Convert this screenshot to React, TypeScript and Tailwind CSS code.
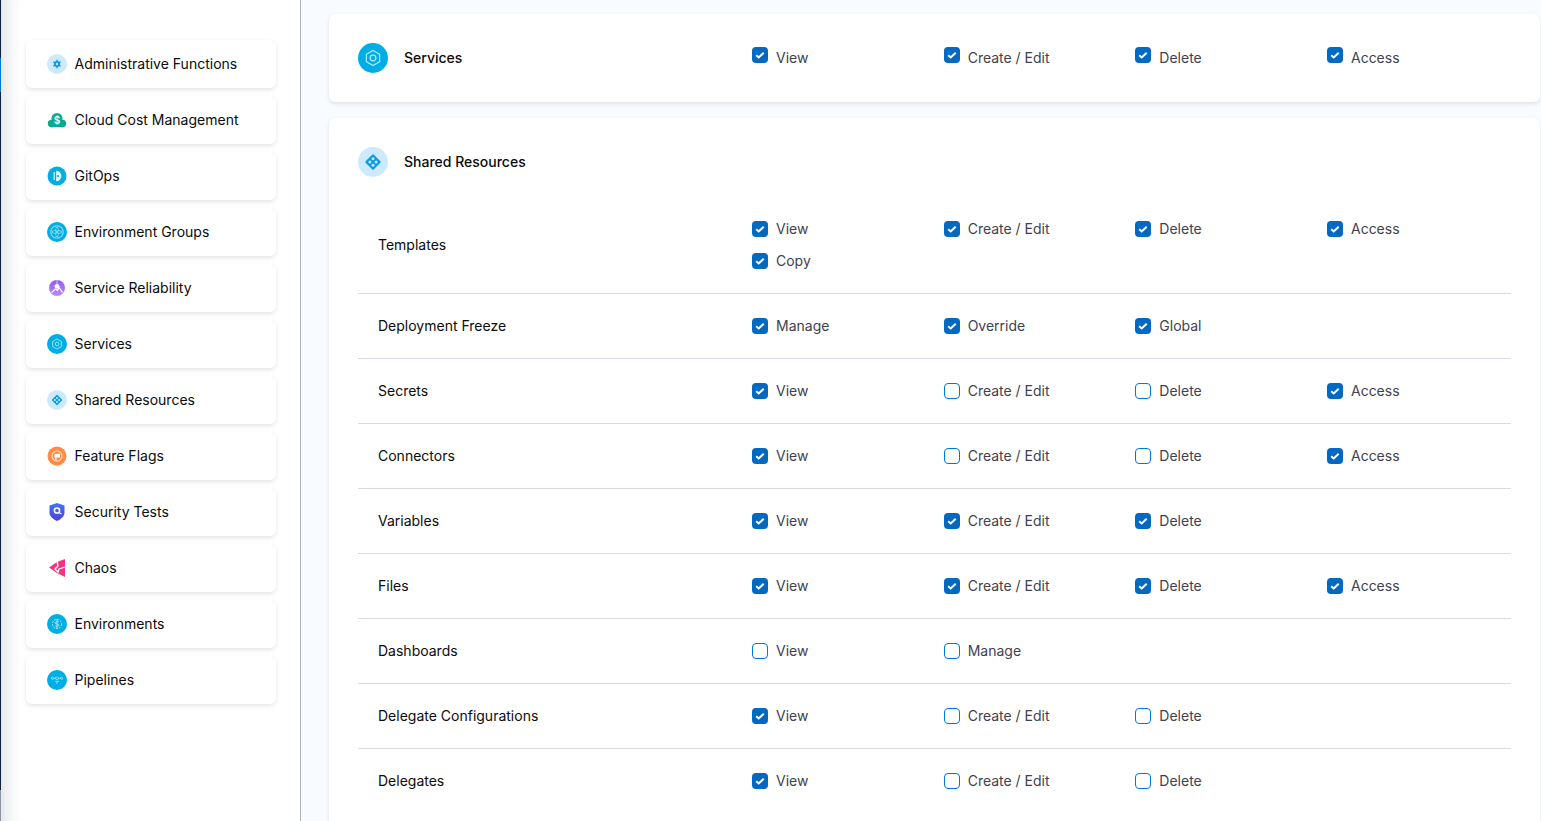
import type { ReactNode } from "react";

const CYAN = "#00ade4";
const PALE = "#cdeafc";

function Round({ bg, children }: { bg: string; children: ReactNode }) {
  return (
    <svg viewBox="0 0 20 20" className="w-5 h-5 shrink-0">
      <circle cx="10" cy="10" r="10" fill={bg} />
      {children}
    </svg>
  );
}

const AdminIcon = () => (
  <Round bg={PALE}>
    <g stroke="#0a9be8" strokeWidth="1.400">
      <path d="M10 5.800v8.400M6.400 7.900l7.200 4.200M6.400 12.100l7.200-4.200" />
    </g>
    <circle cx="10" cy="10" r="3" fill="#0a9be8" />
    <circle cx="10" cy="10" r="1.200" fill={PALE} />
  </Round>
);

const CloudIcon = () => (
  <svg viewBox="0 0 20 20" className="w-5 h-5 shrink-0">
    <g fill="#0ba98f">
      <circle cx="10" cy="8.500" r="5.500" />
      <circle cx="4.500" cy="13.500" r="3.700" />
      <circle cx="15.500" cy="13.500" r="3.700" />
      <rect x="4" y="11" width="12" height="6.200" />
    </g>
    <text x="10" y="14.200" fontSize="10" fontFamily="Inter" fontWeight="600" fill="#fff" textAnchor="middle">$</text>
  </svg>
);

const GitOpsIcon = () => (
  <svg viewBox="0 0 20 20" className="w-5 h-5 shrink-0">
    <circle cx="10" cy="10" r="9.500" fill={CYAN} />
    <path d="M9.200 4.800a5.200 5.200 0 0 1 0 10.400z" fill="#e8f9fe" />
    <circle cx="11" cy="10" r="1.100" fill={CYAN} />
    <path d="M7.200 6v8" stroke="#e8f9fe" strokeWidth="1.100" />
  </svg>
);

const EnvGroupIcon = () => (
  <Round bg={CYAN}>
    <g fill="none" stroke="#a9e6fa" strokeWidth=".6">
      <circle cx="8" cy="8" r="3.500" />
      <circle cx="12" cy="8" r="3.500" />
      <circle cx="8" cy="12" r="3.500" />
      <circle cx="12" cy="12" r="3.500" />
      <circle cx="10" cy="10" r="6.500" />
    </g>
  </Round>
);

const SrmIcon = () => (
  <svg viewBox="0 0 20 20" className="w-5 h-5 shrink-0">
    <defs>
      <linearGradient id="srm" x1="0" y1="0" x2="0" y2="1">
        <stop offset="0" stopColor="#8f5bf0" />
        <stop offset="1" stopColor="#c08af5" />
      </linearGradient>
    </defs>
    <circle cx="10" cy="10" r="8" fill="url(#srm)" />
    <path d="M4.500 14.500l4-3.500 2 1.500 1.500-3 3.500 5" fill="none" stroke="#fff" strokeWidth="1.300" />
    <circle cx="10" cy="8.300" r="2.400" fill="#fff" />
    <path d="M10 2v4" stroke="#f3e9ff" strokeWidth=".7" />
  </svg>
);

const ServiceGlyph = ({ stroke }: { stroke: string }) => (
  <g fill="none" stroke={stroke} strokeWidth=".8">
    <path d="M10 5l4.400 2.500v5L10 15l-4.400-2.500v-5z" />
    <circle cx="10" cy="10" r="1.900" />
  </g>
);

const ServicesSmallIcon = () => (
  <Round bg={CYAN}>
    <ServiceGlyph stroke="#b5ecfc" />
  </Round>
);

const SharedGlyph = () => (
  <g>
    <path d="M10 5.500L14.500 10 10 14.500 5.500 10z" fill="#0a9be8" stroke="#0a9be8" strokeWidth="1.200" strokeLinejoin="round" />
    <g fill={PALE}>
      <circle cx="10" cy="7.900" r="1" />
      <circle cx="10" cy="12.100" r="1" />
      <circle cx="7.900" cy="10" r="1" />
      <circle cx="12.100" cy="10" r="1" />
    </g>
  </g>
);

const SharedSmallIcon = () => (
  <Round bg={PALE}>
    <SharedGlyph />
  </Round>
);

const FlagsIcon = () => (
  <svg viewBox="0 0 20 20" className="w-5 h-5 shrink-0">
    <circle cx="10" cy="10" r="9.500" fill="#ff8b45" />
    <circle cx="10" cy="10" r="5" fill="none" stroke="#ffe3cf" strokeWidth="1.100" />
    <path d="M7.500 7.800h5.500v3.800H9.500v2.400H8.300v-2.400h-.8z" fill="#fff" />
  </svg>
);

const SecurityIcon = () => (
  <svg viewBox="0 0 20 20" className="w-5 h-5 shrink-0">
    <defs>
      <linearGradient id="sto" x1="0" y1="0" x2="0" y2="1">
        <stop offset="0" stopColor="#4773f5" />
        <stop offset="1" stopColor="#4a3fe0" />
      </linearGradient>
    </defs>
    <path d="M10 1l7.500 2.500v7c0 4-3.500 6.500-7.500 8.500-4-2-7.500-4.500-7.500-8.500v-7z" fill="url(#sto)" />
    <circle cx="10" cy="8.500" r="2.600" fill="none" stroke="#fff" strokeWidth="1.500" />
    <path d="M12 10.500l2.500 1.500" stroke="#fff" strokeWidth="1.300" />
  </svg>
);

const ChaosIcon = () => (
  <svg viewBox="0 0 20 20" className="w-5 h-5 shrink-0">
    <path d="M2 9.500L10 4l8-3v18l-8-4z" fill="#f5337f" />
    <path d="M10 3l1 5-3 3 3 3 1-3 6-2" fill="none" stroke="#fff" strokeWidth="1.300" />
  </svg>
);

const EnvironmentsIcon = () => (
  <Round bg={CYAN}>
    <g fill="none" stroke="#c5f1fd" strokeWidth=".8">
      <circle cx="10" cy="10" r="4.600" strokeDasharray="2 1" />
      <path d="M12 8.200c-.5-.8-3.800-1-3.800.6 0 1.800 3.800.6 3.800 2.400 0 1.500-3.400 1.300-4 .5M10 5v10" />
    </g>
  </Round>
);

const PipelinesIcon = () => (
  <Round bg={CYAN}>
    <g fill="none" stroke="#c5f1fd" strokeWidth=".7">
      <circle cx="5.500" cy="8.300" r="1.100" />
      <rect x="8.500" y="7.300" width="3" height="2" rx=".6" />
      <circle cx="14.500" cy="8.300" r="1.100" />
      <path d="M6.600 8.300h1.900M11.500 8.300h1.900M8 11.300h4M9 13h2" />
    </g>
  </Round>
);

function CheckBox({ checked }: { checked: boolean }) {
  if (!checked) {
    return <span className="w-4 h-4 shrink-0 rounded-[4px] border border-[#0278d5] bg-white" />;
  }
  return (
    <span className="w-4 h-4 shrink-0 rounded-[4px] bg-[#0269c2] flex items-center justify-center">
      <svg viewBox="0 0 16 16" className="w-4 h-4">
        <path d="M4.200 8.300l2.500 2.200 5-4.700" fill="none" stroke="#fff" strokeWidth="2" />
      </svg>
    </span>
  );
}

type Perm = [string, boolean];

function Option({ perm, raised }: { perm: Perm; raised?: boolean }) {
  return (
    <div className="flex items-center gap-2 h-8 text-sm text-[#3f4150]">
      <span className={raised ? "flex -mt-[6px]" : "flex"}>
        <CheckBox checked={perm[1]} />
      </span>
      <span>{perm[0]}</span>
    </div>
  );
}

const sideItems: { label: string; icon: ReactNode }[] = [
  { label: "Administrative Functions", icon: <AdminIcon /> },
  { label: "Cloud Cost Management", icon: <CloudIcon /> },
  { label: "GitOps", icon: <GitOpsIcon /> },
  { label: "Environment Groups", icon: <EnvGroupIcon /> },
  { label: "Service Reliability", icon: <SrmIcon /> },
  { label: "Services", icon: <ServicesSmallIcon /> },
  { label: "Shared Resources", icon: <SharedSmallIcon /> },
  { label: "Feature Flags", icon: <FlagsIcon /> },
  { label: "Security Tests", icon: <SecurityIcon /> },
  { label: "Chaos", icon: <ChaosIcon /> },
  { label: "Environments", icon: <EnvironmentsIcon /> },
  { label: "Pipelines", icon: <PipelinesIcon /> },
];

const crud = (c: boolean, d: boolean): Perm[] => [
  ["View", true],
  ["Create / Edit", c],
  ["Delete", d],
];

const rows: { name: string; perms: Perm[] }[] = [
  {
    name: "Templates",
    perms: [["View", true], ["Create / Edit", true], ["Delete", true], ["Access", true], ["Copy", true]],
  },
  { name: "Deployment Freeze", perms: [["Manage", true], ["Override", true], ["Global", true]] },
  { name: "Secrets", perms: [...crud(false, false), ["Access", true]] },
  { name: "Connectors", perms: [...crud(false, false), ["Access", true]] },
  { name: "Variables", perms: crud(true, true) },
  { name: "Files", perms: [...crud(true, true), ["Access", true]] },
  { name: "Dashboards", perms: [["View", false], ["Manage", false]] },
  { name: "Delegate Configurations", perms: crud(false, false) },
  { name: "Delegates", perms: crud(false, false) },
];

const cardShadow = "shadow-[0_0_1px_rgba(40,41,61,0.04),0_2px_4px_rgba(96,97,112,0.16)]";

export default function App() {
  return (
    <div
      className="flex h-[821px] w-[1541px] overflow-hidden bg-white"
      style={{ fontFamily: "Inter, 'Liberation Sans', sans-serif" }}
    >
      {/* nav edge */}
      <div className="w-px shrink-0 flex flex-col bg-[#0f2137]">
        <div className="h-[58px]" />
        <div className="h-[34px] bg-[#0278d5]" />
        <div className="flex-1" />
        <div className="h-[31px] bg-[#8d93a0]" />
      </div>

      {/* sidebar */}
      <aside className="w-[300px] shrink-0 h-full border-r border-[#b0b1c4] bg-white pl-[25px] pt-10 shadow-[inset_22px_0_16px_-16px_rgba(30,50,80,0.14)]">
        <div className="flex flex-col gap-2 w-[250px]">
          {sideItems.map((item) => (
            <div key={item.label} className={`h-12 rounded-md bg-white flex items-center gap-[7.5px] pl-[21px] text-sm text-[#0b0b0d] ${cardShadow}`}>
              {item.icon}
              <span>{item.label}</span>
            </div>
          ))}
        </div>
      </aside>

      {/* main */}
      <main className="flex-1 min-w-0 h-full bg-[#f8fbff] pl-7 pr-px">
        <div className={`h-0 rounded-md bg-white ${cardShadow}`} />
        <div className={`mt-[14px] h-[88px] rounded-md bg-white px-[29px] flex items-center ${cardShadow}`}>
          <div className="w-[394px] shrink-0 flex items-center gap-4">
            <svg viewBox="0 0 20 20" className="w-[30px] h-[30px] shrink-0">
              <circle cx="10" cy="10" r="10" fill={CYAN} />
              <ServiceGlyph stroke="#b5ecfc" />
            </svg>
            <span className="text-sm font-medium text-[#0b0b0d]">Services</span>
          </div>
          <div className="grid grid-cols-[repeat(4,191.67px)]">
            <Option perm={["View", true]} raised />
            <Option perm={["Create / Edit", true]} raised />
            <Option perm={["Delete", true]} raised />
            <Option perm={["Access", true]} raised />
          </div>
        </div>

        <div className={`mt-4 rounded-md bg-white px-[29px] pt-[29px] pb-10 ${cardShadow}`}>
          <div className="flex items-center gap-4 mb-5">
            <svg viewBox="0 0 20 20" className="w-[30px] h-[30px] shrink-0">
              <circle cx="10" cy="10" r="10" fill={PALE} />
              <SharedGlyph />
            </svg>
            <span className="text-sm font-medium text-[#0b0b0d]">Shared Resources</span>
          </div>
          {rows.map((row) => (
            <div key={row.name} className="flex items-center py-4 border-b border-[#d9dae5] last:border-b-0">
              <div className="w-[394px] shrink-0 pl-5 text-sm text-[#0b0b0d]">{row.name}</div>
              <div className="grid grid-cols-[repeat(4,191.67px)]">
                {row.perms.map((p) => (
                  <Option key={p[0]} perm={p} />
                ))}
              </div>
            </div>
          ))}
        </div>
      </main>
    </div>
  );
}
